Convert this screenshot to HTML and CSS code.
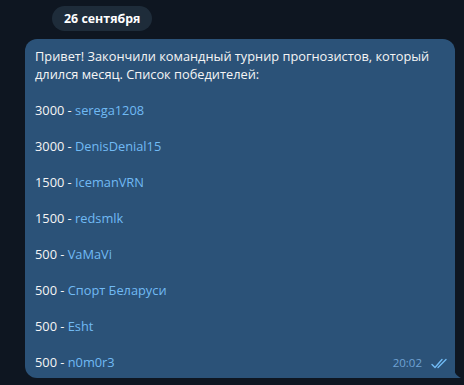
FILE: index.html
```html
<!DOCTYPE html>
<html lang="ru">
<head>
  <meta charset="UTF-8" />
  <title>Чат</title>
  <link rel="stylesheet" href="styles.css">
</head>
<body>
  <div class="chat">
    <div class="date-row"><span class="date">26 сентября</span></div>

    <div class="msg">
      <p>Привет! Закончили командный турнир прогнозистов, который длился месяц. Список победителей:</p>
      <p>3000 - <a href="#">serega1208</a></p>
      <p>3000 - <a href="#">DenisDenial15</a></p>
      <p>1500 - <a href="#">IcemanVRN</a></p>
      <p>1500 - <a href="#">redsmlk</a></p>
      <p>500 - <a href="#">VaMaVi</a></p>
      <p>500 - <a href="#">Спорт Беларуси</a></p>
      <p>500 - <a href="#">Esht</a></p>
      <div class="last">
        <p>500 - <a href="#">n0m0r3</a></p>
        <div class="meta">
          <span class="time">20:02</span>
          <svg class="checks" width="17" height="11" viewBox="0 0 17 11">
            <path d="M1 6.5 L4 9.5 L11 1.5" />
            <path d="M7 9.5 L15 1.5" />
          </svg>
        </div>
      </div>
      <svg class="tail" width="8" height="10" viewBox="0 0 8 10">
        <path d="M0 0 C0 5 3 8 7 10 L0 10 Z" />
      </svg>
    </div>
  </div>
</body>
</html>
```

FILE: styles.css
```css
body {
  margin: 0;
  background: #0e1621;
  font-family: 'Open Sans', sans-serif;
  color: #f5f5f5;
}

.chat {
  padding: 6px 0 0 25px;
}

.date-row {
  padding-left: 27px;
  margin-bottom: 8px;
}

.date {
  display: inline-block;
  background: #1e2c3a;
  color: #fff;
  font-weight: bold;
  font-size: 12.4px;
  line-height: 25px;
  padding: 0 12px;
  border-radius: 13px;
}

.msg {
  position: relative;
  width: 410px;
  background: #2b5278;
  border-radius: 12px 12px 0 12px;
  padding: 8px 10px 7px;
  font-size: 12.8px;
  line-height: 18px;
}

.msg p {
  margin: 0 0 18px;
}

.msg a {
  color: #71baf4;
  text-decoration: none;
}

.last {
  display: flex;
  justify-content: space-between;
  align-items: flex-end;
}

.last p {
  margin: 0;
}

.meta {
  display: flex;
  align-items: center;
  gap: 9px;
  margin-right: -3px;
}

.time {
  font-size: 11.5px;
  color: #6fa2d4;
  line-height: 16px;
}

.checks path {
  fill: none;
  stroke: #71baf4;
  stroke-width: 1.4;
  stroke-linecap: round;
  stroke-linejoin: round;
}

.tail {
  position: absolute;
  right: -7px;
  bottom: 0;
  display: block;
}

.tail path {
  fill: #2b5278;
}
```
